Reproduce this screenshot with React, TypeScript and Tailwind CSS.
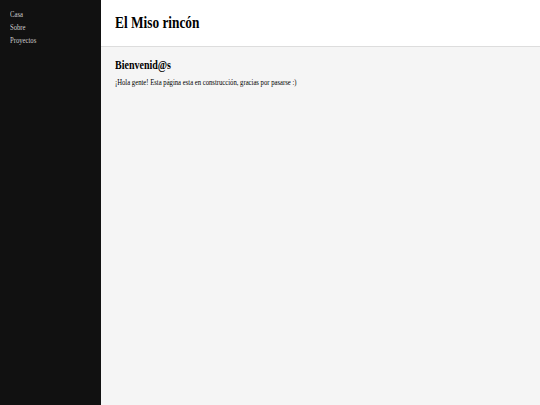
import React from "react";

// the reference is squeezed horizontally, so text is narrowed with scale-x
export default function App() {
  const links = ["Casa", "Sobre", "Proyectos"];
  return (
    <div className="flex min-h-[405px] h-screen font-['Liberation_Serif',serif] text-black">
      <nav className="w-[101px] shrink-0 bg-[#111111] pt-[8px] pl-[10px] flex flex-col">
        {links.map((l) => (
          <a
            key={l}
            href="#"
            className="block text-[8px] leading-[13px] text-[#cccccc] origin-left scale-x-[0.833]"
          >
            {l}
          </a>
        ))}
      </nav>
      <div className="flex-1 flex flex-col bg-[#f5f5f5]">
        <header className="h-[47px] bg-white border-b border-[#dddddd] flex items-center pl-[14px]">
          <h1 className="text-[16px] font-bold origin-left scale-x-[0.833]">El Miso rincón</h1>
        </header>
        <main className="pl-[14px] pt-[11px]">
          <h2 className="text-[12px] font-bold leading-[14px] origin-left scale-x-[0.833]">Bienvenid@s</h2>
          <p className="text-[8px] mt-[5px] origin-left scale-x-[0.833]">
            ¡Hola gente! Esta página esta en construcción, gracias por pasarse :)
          </p>
        </main>
      </div>
    </div>
  );
}
